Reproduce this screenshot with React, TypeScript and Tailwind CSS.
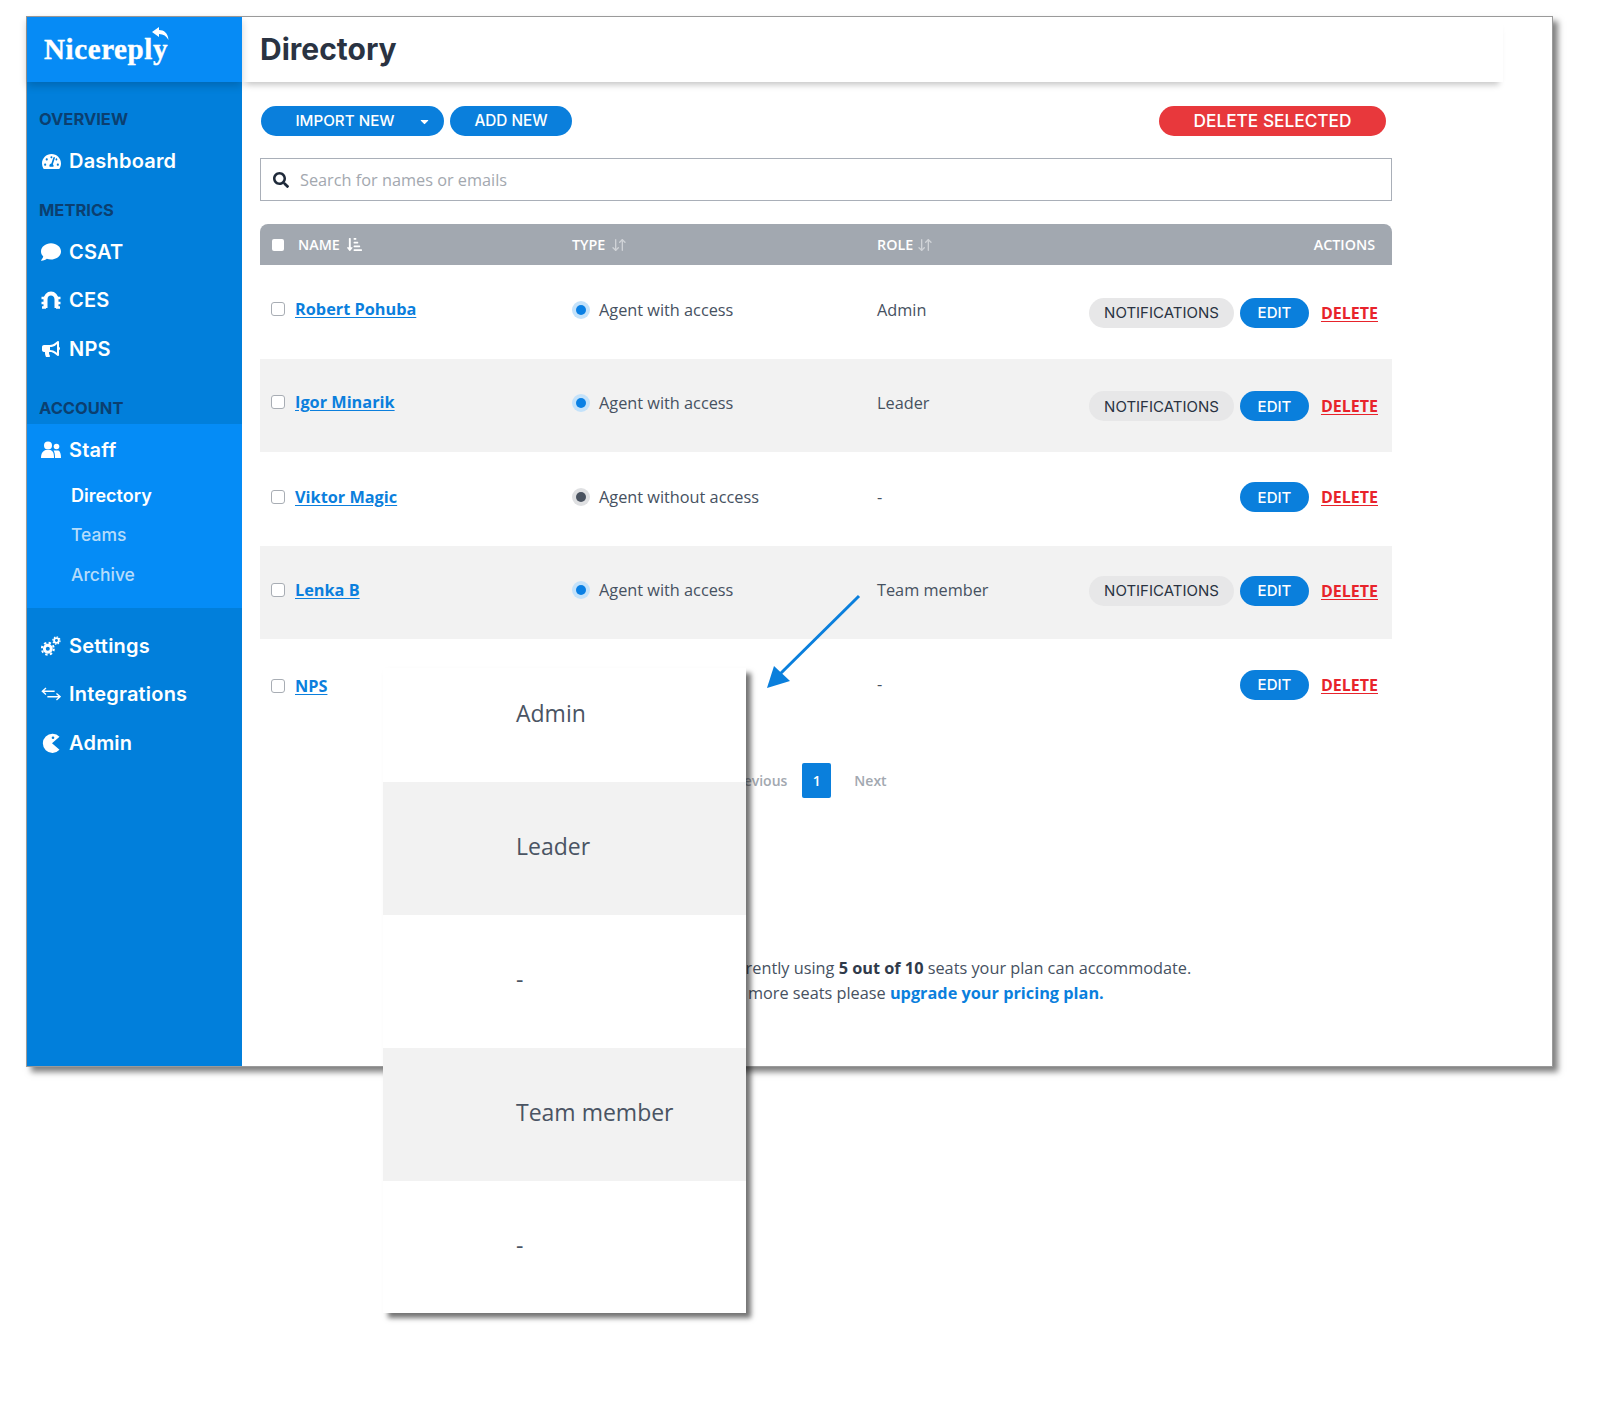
import React from "react";
import { FaTachometerAlt, FaComment, FaBullhorn, FaSearch, FaSortAmountDownAlt, FaCaretDown } from "react-icons/fa";
import { ArrowDownUp } from "lucide-react";

const Label = ({ children, cls }: { children: React.ReactNode; cls: string }) => (
  <div className={`h-[20px] pl-[12px] flex items-center text-[16.500px] font-bold text-[#0b3f70] ${cls}`}>{children}</div>
);

const Nav = ({ icon, children, cls = "" }: { icon: React.ReactNode; children: React.ReactNode; cls?: string }) => (
  <div className={`h-[48px] flex items-center pl-[14px] text-white text-[20px] font-semibold tracking-[0.2px] ${cls}`}>
    <span className="w-[20px] h-[20px] mr-[8px] flex items-center justify-center">{icon}</span>
    <span>{children}</span>
  </div>
);

const CesIcon = () => (
  <svg width="20" height="20" viewBox="0 0 20 20" fill="none" stroke="white">
    <path d="M4.500 18V9.500a5.500 6 0 0 1 11 0V18" strokeWidth="4" />
    <path d="M0.500 8h4M0.500 13h4M1 17.500h4M15.500 8h4M15.500 13h4M15 17.500h4" strokeWidth="2.400" />
  </svg>
);
const StaffIcon = () => (
  <svg width="20" height="20" viewBox="0 0 20 20" fill="white">
    <circle cx="7" cy="5.500" r="4" />
    <path d="M0 18c0-5 2-7 4.500-8h5c2.500 1 3.500 3 3.500 8Z" />
    <circle cx="15.500" cy="6.500" r="2.800" />
    <path d="M14 18c0-4-.5-6-1.500-7.500h5c1.800 1 2.500 3.500 2.500 7.500Z" />
  </svg>
);
const CogsIcon = () => (
  <svg width="22" height="22" viewBox="0 0 22 22" fill="none" stroke="white">
    <circle cx="7.500" cy="14" r="3.800" strokeWidth="3.200" />
    <circle cx="7.500" cy="14" r="6.600" strokeWidth="2.200" strokeDasharray="2.600 2.600" />
    <circle cx="17" cy="5" r="2.600" strokeWidth="2" />
    <circle cx="17" cy="5" r="4" strokeWidth="1.300" strokeDasharray="1.600 1.500" />
  </svg>
);
const SwapIcon = () => (
  <svg width="22" height="20" viewBox="0 0 22 20" fill="none" stroke="white" strokeWidth="1.500">
    <path d="M15 7H2M5.500 3.500 1.500 7l4 3.500" />
    <path d="M7 13h14M17 9.500l4 3.500-4 3.500" />
  </svg>
);
const PacIcon = () => (
  <svg width="22" height="22" viewBox="0 0 20 20" fill="white">
    <path d="M18.500 3.800A9.600 9.600 0 1 0 18.500 16.800L11 10.300Z" />
    <circle cx="12" cy="4.800" r="1.300" fill="#017fdb" />
  </svg>
);

const Btn = ({ children, cls }: { children: React.ReactNode; cls: string }) => (
  <div className={`h-[30px] rounded-full flex items-center justify-center ${cls}`}>{children}</div>
);

type RowT = {
  name: string; type: string; role: string; notif: boolean; gray: boolean; on: boolean;
  namePad: string; typePad: string; actPad: string;
};
const rows: RowT[] = [
  { name: "Robert Pohuba", type: "Agent with access", role: "Admin", notif: true, gray: false, on: true, namePad: "mb-[6px]", typePad: "mb-[4px]", actPad: "mt-[2px]" },
  { name: "Igor Minarik", type: "Agent with access", role: "Leader", notif: true, gray: true, on: true, namePad: "mb-[6px]", typePad: "mb-[4px]", actPad: "mt-[2px]" },
  { name: "Viktor Magic", type: "Agent without access", role: "-", notif: false, gray: false, on: false, namePad: "mb-[4px]", typePad: "mb-[3px]", actPad: "mb-[3px]" },
  { name: "Lenka B", type: "Agent with access", role: "Team member", notif: true, gray: true, on: true, namePad: "mb-[5px]", typePad: "mb-[5px]", actPad: "mb-[3px]" },
  { name: "NPS", type: "", role: "-", notif: false, gray: false, on: false, namePad: "", typePad: "mb-[4px]", actPad: "mb-[2px]" },
];

const Row = ({ r }: { r: RowT }) => (
  <div className={`h-[93.500px] grid grid-cols-[35px_277px_305px_1fr] items-center ${r.gray ? "bg-[#f2f2f2]" : "bg-white"}`}>
    <div className={`pl-[11px] ${r.namePad}`}>
      <div className="w-[14px] h-[14px] rounded-[3px] border border-[#a8adb4] bg-white" />
    </div>
    <a className={`text-[16.300px] font-bold text-[#0b7fdd] underline underline-offset-2 ${r.namePad}`}>{r.name}</a>
    <div className={`flex items-center text-[16.300px] text-[#465161] ${r.typePad}`}>
      {r.type && (
        <>
          <span className={`w-[18px] h-[18px] rounded-full flex items-center justify-center mr-[9px] ${r.on ? "bg-[#c4e2fa]" : "bg-[#dfe0e2]"}`}>
            <span className={`w-[10px] h-[10px] rounded-full ${r.on ? "bg-[#0a80e4]" : "bg-[#4a5360]"}`} />
          </span>
          <span>{r.type}</span>
        </>
      )}
    </div>
    <div className="relative flex items-center">
      <span className={`text-[16.300px] text-[#465161] ${r.typePad}`}>{r.role}</span>
      <div className={`ml-auto pr-[14px] flex items-center font-['Inter',sans-serif] ${r.actPad}`}>
        {r.notif && <Btn cls="w-[145px] bg-[#e7e7e8] text-[#2a3342] mr-[6px] text-[15px] pt-[1px]">NOTIFICATIONS</Btn>}
        <Btn cls="w-[69px] bg-[#0a7fdc] text-white mr-[12px] text-[15px] font-medium pt-[1px]">EDIT</Btn>
        <a className="text-[16px] font-bold font-['Open_Sans',sans-serif] text-[#e8232b] underline underline-offset-2">DELETE</a>
      </div>
    </div>
  </div>
);

const OverlayRow = ({ children, cls }: { children: React.ReactNode; cls: string }) => (
  <div className={`flex items-center pl-[133px] text-[23px] text-[#4a5463] ${cls}`}>{children}</div>
);

export default function App() {
  return (
    <div className="relative w-[1600px] h-[1402px] bg-white pt-[16px] pl-[26px] font-['Open_Sans',sans-serif]">
      <div className="w-[1527px] h-[1051px] flex bg-white border border-[#9a9a9a] shadow-[5px_5px_6px_rgba(0,0,0,0.5)]">
        {/* Sidebar */}
        <aside className="w-[215px] shrink-0 bg-[#017fdb] font-['Inter',sans-serif]">
          <div className="relative h-[65px] bg-[#068bf5] shadow-[0_4px_8px_rgba(0,0,0,0.18)] pl-[17px] flex items-center">
            <span className="text-white text-[29px] font-bold font-['Liberation_Serif',serif] tracking-[0.600px] [-webkit-text-stroke:0.400px_white]">Nicereply</span>
            <svg className="absolute left-[125px] top-[10px]" width="18" height="14" viewBox="0 0 18 14" fill="white">
              <path d="M0 5 7 0v3c5 0 9 3 9.500 10-2-4-5-6-9.500-6v3Z" />
            </svg>
          </div>
          <div className="pt-[27px]">
            <Label cls="">OVERVIEW</Label>
            <Nav cls="mt-[8px]" icon={<FaTachometerAlt size={19} />}>Dashboard</Nav>
            <Label cls="mt-[15px]">METRICS</Label>
            <Nav cls="mt-[8px]" icon={<FaComment size={20} />}>CSAT</Nav>
            <Nav icon={<CesIcon />}>CES</Nav>
            <Nav cls="mt-[1px]" icon={<FaBullhorn size={18} />}>NPS</Nav>
            <Label cls="mt-[25px]">ACCOUNT</Label>
            <div className="mt-[6px] bg-[#058cf6] pt-[2px] pb-[13px]">
              <Nav icon={<StaffIcon />}>Staff</Nav>
              <div className="mt-[1px] h-[40px] pl-[44px] flex items-center text-[18px] font-semibold text-white">Directory</div>
              <div className="h-[40px] pl-[44px] flex items-center text-[17.500px] font-medium text-[#b5dcfb]">Teams</div>
              <div className="h-[40px] pl-[44px] flex items-center text-[17.500px] font-medium text-[#b5dcfb]">Archive</div>
            </div>
            <Nav cls="mt-[14px]" icon={<CogsIcon />}>Settings</Nav>
            <Nav icon={<SwapIcon />}>Integrations</Nav>
            <Nav cls="mt-[1px]" icon={<PacIcon />}>Admin</Nav>
          </div>
        </aside>

        {/* Main */}
        <main className="flex-1 min-w-0">
          <header className="w-[1261px] h-[65px] pl-[18px] flex items-center bg-white shadow-[0_7px_6px_-4px_rgba(0,0,0,0.22)]">
            <h1 className="text-[30px] font-bold text-[#2a3342] font-['Inter',sans-serif]">Directory</h1>
          </header>
          <div className="w-[1132px] ml-[18px] pt-[24px]">
            <div className="flex items-center font-['Inter',sans-serif] font-medium">
              <Btn cls="relative ml-[1px] w-[183px] bg-[#0a7fdc] text-white pr-[15px] text-[15.200px]">
                IMPORT NEW
                <FaCaretDown className="absolute right-[13px] top-[9px]" size={13} />
              </Btn>
              <Btn cls="ml-[6px] w-[122px] bg-[#0a7fdc] text-white text-[15.300px]">ADD NEW</Btn>
              <Btn cls="ml-auto mr-[6px] w-[227px] bg-[#e8383c] text-white text-[17.300px]">DELETE SELECTED</Btn>
            </div>
            <div className="mt-[22px] h-[43px] flex items-center border border-[#a9afb8] bg-white pl-[12px]">
              <FaSearch size={16} className="text-[#1f2a3a]" />
              <span className="ml-[11px] pt-[2px] text-[16.300px] text-[#a3a8af]">Search for names or emails</span>
            </div>
            <div className="mt-[23px] h-[41px] rounded-t-[8px] bg-[#a2a8b0] grid grid-cols-[35px_277px_305px_1fr] items-center text-white text-[14.300px] font-semibold">
              <div className="pl-[12px]"><div className="w-[12px] h-[12px] rounded-[2px] bg-white" /></div>
              <div className="flex items-center pl-[3px]">NAME<FaSortAmountDownAlt className="ml-[7px]" size={15} /></div>
              <div className="flex items-center">TYPE<ArrowDownUp className="ml-[6px] text-[#d0d3d7]" size={16} strokeWidth={2} /></div>
              <div className="flex items-center">ROLE<ArrowDownUp className="ml-[4px] text-[#d0d3d7]" size={16} strokeWidth={2} /><span className="ml-auto pr-[17px]">ACTIONS</span></div>
            </div>
            {rows.map((r) => <Row key={r.name} r={r} />)}
            <div className="mt-[30px] ml-[469px] flex items-center text-[14px] font-semibold text-[#a2a8b0]">
              <span className="mr-[15px]">Previous</span>
              <span className="w-[29px] h-[35px] rounded-[2px] bg-[#0a7fdc] text-white flex items-center justify-center">1</span>
              <span className="ml-[23px]">Next</span>
            </div>
            <div className="mt-[158px] ml-[399px] text-[16.300px] leading-[25px] text-[#465161]">
              <p>You are currently using <b className="font-bold text-[#2f3a4a]">5 out of 10</b> seats your plan can accommodate.</p>
              <p>If you need more seats please <a className="font-bold text-[#0b7fdd]">upgrade your pricing plan.</a></p>
            </div>
          </div>
        </main>
      </div>

      {/* Arrow annotation */}
      <svg className="absolute left-[760px] top-[590px]" width="105" height="105" viewBox="760 590 105 105">
        <path d="M859 596 778 676" stroke="#0a7fdc" strokeWidth="3" fill="none" />
        <path d="M767 688 774 666 790 681Z" fill="#0a7fdc" />
      </svg>

      {/* Zoomed callout */}
      <div className="absolute left-[383px] top-[668px] w-[363px] h-[645px] bg-white shadow-[5px_5px_5px_rgba(0,0,0,0.55)] flex flex-col font-['Open_Sans',sans-serif]">
        <OverlayRow cls="h-[114px] pb-[24px]">Admin</OverlayRow>
        <OverlayRow cls="h-[133px] pb-[4px] bg-[#f2f2f2]">Leader</OverlayRow>
        <OverlayRow cls="h-[133px] pb-[4px]">-</OverlayRow>
        <OverlayRow cls="h-[133px] pb-[5px] bg-[#f2f2f2]">Team member</OverlayRow>
        <OverlayRow cls="h-[132px] pb-[4px]">-</OverlayRow>
      </div>
    </div>
  );
}
